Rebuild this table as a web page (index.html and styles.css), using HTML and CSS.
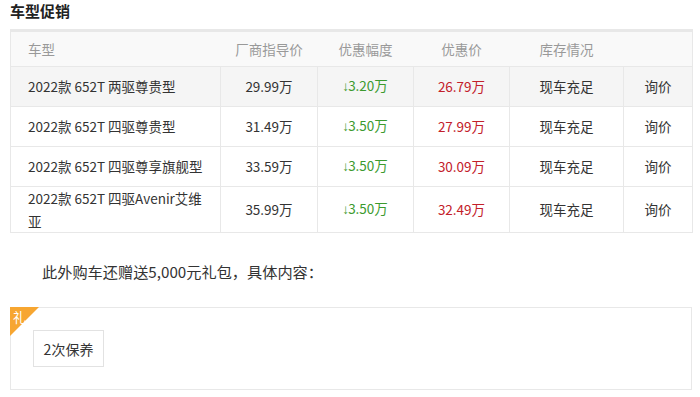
FILE: index.html
```html
<!DOCTYPE html>
<html lang="zh">
<head>
<meta charset="utf-8">
<link rel="stylesheet" href="styles.css">
</head>
<body>
<div class="page">
  <h2 class="title">车型促销</h2>
  <table class="promo">
    <colgroup>
      <col class="c1"><col class="c2"><col class="c3"><col class="c4"><col class="c5"><col class="c6">
    </colgroup>
    <thead>
      <tr>
        <th class="left">车型</th>
        <th>厂商指导价</th>
        <th>优惠幅度</th>
        <th>优惠价</th>
        <th>库存情况</th>
        <th></th>
      </tr>
    </thead>
    <tbody>
      <tr class="hl">
        <td class="left">2022款 652T 两驱尊贵型</td>
        <td>29.99万</td>
        <td class="down"><span class="arrow">↓</span>3.20万</td>
        <td class="price">26.79万</td>
        <td>现车充足</td>
        <td>询价</td>
      </tr>
      <tr>
        <td class="left">2022款 652T 四驱尊贵型</td>
        <td>31.49万</td>
        <td class="down"><span class="arrow">↓</span>3.50万</td>
        <td class="price">27.99万</td>
        <td>现车充足</td>
        <td>询价</td>
      </tr>
      <tr>
        <td class="left">2022款 652T 四驱尊享旗舰型</td>
        <td>33.59万</td>
        <td class="down"><span class="arrow">↓</span>3.50万</td>
        <td class="price">30.09万</td>
        <td>现车充足</td>
        <td>询价</td>
      </tr>
      <tr>
        <td class="left">2022款 652T 四驱Avenir艾维亚</td>
        <td>35.99万</td>
        <td class="down"><span class="arrow">↓</span>3.50万</td>
        <td class="price">32.49万</td>
        <td>现车充足</td>
        <td>询价</td>
      </tr>
    </tbody>
  </table>
  <p class="extra">此外购车还赠送5,000元礼包，具体内容：</p>
  <div class="gift">
    <span class="corner"></span>
    <span class="corner-text">礼</span>
    <div class="tags">
      <span class="tag">2次保养</span>
    </div>
  </div>
</div>
</body>
</html>
```

FILE: styles.css
```css
* { box-sizing: border-box; }
html, body {
  margin: 0;
  padding: 0;
  background: #fff;
}
body {
  font-family: "Microsoft YaHei", "Noto Sans CJK SC", "Noto Sans", sans-serif;
  color: #333;
}
.page {
  padding: 0 9px 0 10px;
}
.title {
  margin: 0;
  padding-top: 1px;
  font-size: 15px;
  line-height: 20px;
  font-weight: bold;
  color: #222;
  height: 29px;
}
.promo {
  width: 682px;
  border-collapse: collapse;
  table-layout: fixed;
  font-size: 13.5px;
}
.c1 { width: 210px; }
.c2 { width: 97px; }
.c3 { width: 96px; }
.c4 { width: 96px; }
.c5 { width: 114px; }
.c6 { width: 69px; }
.promo th {
  height: 36px;
  font-weight: normal;
  color: #999;
  background: #f9f9f9;
  border-top: 3px solid #e8e8e8;
  border-bottom: 1px solid #e8e8e8;
  text-align: center;
  padding: 0;
}
.promo th:first-child { border-left: 1px solid #e8e8e8; }
.promo th:last-child { border-right: 1px solid #e8e8e8; }
.promo td {
  height: 40px;
  border: 1px solid #e8e8e8;
  text-align: center;
  padding: 0;
  line-height: 22.5px;
}
.promo .left {
  text-align: left;
  padding: 0 8px 0 17px;
}
.promo tr.hl td { background: #f5f5f5; }
.promo .down { color: #3c9a2e; }
.promo .arrow {
  font-family: "Liberation Sans", sans-serif;
  display: inline-block;
  width: 6px;
  overflow: visible;
  margin-left: -1px;
}
.promo .price { color: #c3202a; }
.extra {
  margin: 0;
  padding: 27px 0 0 32px;
  font-size: 15.2px;
  line-height: 22px;
  height: 74px;
}
.gift {
  position: relative;
  width: 682px;
  height: 83px;
  border: 1px solid #e8e8e8;
  padding: 22px 0 0 22px;
}
.corner {
  position: absolute;
  left: -1px;
  top: -1px;
  width: 0;
  height: 0;
  border-top: 29px solid #f7a631;
  border-right: 29px solid transparent;
}
.corner-text {
  position: absolute;
  left: 2px;
  top: 0;
  font-size: 13px;
  line-height: 17px;
  color: #fff;
}
.tags {
  display: flex;
  gap: 10px;
}
.tag {
  display: inline-flex;
  align-items: center;
  justify-content: center;
  width: 71px;
  height: 37px;
  border: 1px solid #e2e2e2;
  font-size: 14px;
  color: #333;
}
```
